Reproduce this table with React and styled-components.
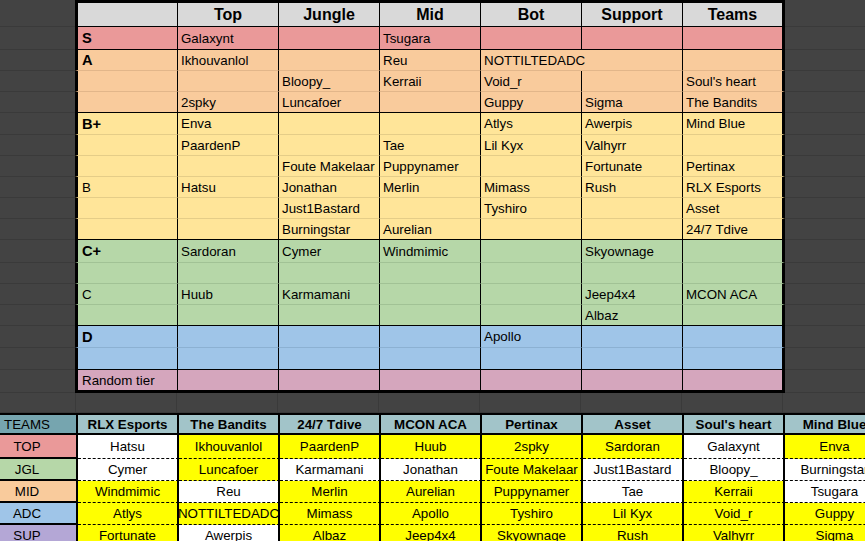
import styled, { createGlobalStyle } from 'styled-components'

const GRID = '#3a3a3a'

const GlobalStyle = createGlobalStyle`
  html, body {
    margin: 0;
    padding: 0;
    background: #434343;
  }

  body {
    font-family: "Liberation Sans", Arial, sans-serif;
    color: #000;
    overflow: hidden;
  }
`

const tiers = {
  S: { bg: '#ea9999', line: '#d48a8a' },
  A: { bg: '#f9cb9c', line: '#e2b68a' },
  B: { bg: '#ffe599', line: '#e5cd88' },
  C: { bg: '#b6d7a8', line: '#a1c295' },
  D: { bg: '#9fc5e8', line: '#8cb1d2' },
  R: { bg: '#d5a6bd', line: '#000' },
}

const columns = ['Top', 'Jungle', 'Mid', 'Bot', 'Support', 'Teams']
const widths = [103, 101, 101, 101, 101, 101, 102]

const tierRows = [
  { tier: 'S', h: 23, label: 'S', strong: true, end: true, cells: ['Galaxynt', '', 'Tsugara', '', '', ''] },
  { tier: 'A', h: 21, label: 'A', strong: true, spill: 4, cells: ['Ikhouvanlol', '', 'Reu', 'NOTTILTEDADC', '', ''] },
  { tier: 'A', h: 21, cells: ['', 'Bloopy_', 'Kerraii', 'Void_r', '', "Soul's heart"] },
  { tier: 'A', h: 21, end: true, cells: ['2spky', 'Luncafoer', '', 'Guppy', 'Sigma', 'The Bandits'] },
  { tier: 'B', h: 22, label: 'B+', strong: true, cells: ['Enva', '', '', 'Atlys', 'Awerpis', 'Mind Blue'] },
  { tier: 'B', h: 21, cells: ['PaardenP', '', 'Tae', 'Lil Kyx', 'Valhyrr', ''] },
  { tier: 'B', h: 21, cells: ['', 'Foute Makelaar', 'Puppynamer', '', 'Fortunate', 'Pertinax'] },
  { tier: 'B', h: 21, label: 'B', cells: ['Hatsu', 'Jonathan', 'Merlin', 'Mimass', 'Rush', 'RLX Esports'] },
  { tier: 'B', h: 21, cells: ['', 'Just1Bastard', '', 'Tyshiro', '', 'Asset'] },
  { tier: 'B', h: 21, end: true, cells: ['', 'Burningstar', 'Aurelian', '', '', '24/7 Tdive'] },
  { tier: 'C', h: 23, label: 'C+', strong: true, cells: ['Sardoran', 'Cymer', 'Windmimic', '', 'Skyownage', ''] },
  { tier: 'C', h: 21, cells: ['', '', '', '', '', ''] },
  { tier: 'C', h: 21, label: 'C', cells: ['Huub', 'Karmamani', '', '', 'Jeep4x4', 'MCON ACA'] },
  { tier: 'C', h: 21, end: true, cells: ['', '', '', '', 'Albaz', ''] },
  { tier: 'D', h: 22, label: 'D', strong: true, cells: ['', '', '', 'Apollo', '', ''] },
  { tier: 'D', h: 22, end: true, cells: ['', '', '', '', '', ''] },
  { tier: 'R', h: 23, label: 'Random tier', last: true, cells: ['', '', '', '', '', ''] },
]

const teams = ['RLX Esports', 'The Bandits', '24/7 Tdive', 'MCON ACA', 'Pertinax', 'Asset', "Soul's heart", 'Mind Blue']

// 1 = picked (yellow), 0 = white
const roster = [
  { role: 'TOP', bg: '#ea9999', h: 24, picks: [['Hatsu', 0], ['Ikhouvanlol', 1], ['PaardenP', 1], ['Huub', 1], ['2spky', 1], ['Sardoran', 1], ['Galaxynt', 0], ['Enva', 1]] },
  { role: 'JGL', bg: '#b6d7a8', h: 22, picks: [['Cymer', 0], ['Luncafoer', 1], ['Karmamani', 0], ['Jonathan', 0], ['Foute Makelaar', 1], ['Just1Bastard', 0], ['Bloopy_', 0], ['Burningstar', 0]] },
  { role: 'MID', bg: '#f9cb9c', h: 22, picks: [['Windmimic', 1], ['Reu', 0], ['Merlin', 1], ['Aurelian', 1], ['Puppynamer', 1], ['Tae', 0], ['Kerraii', 1], ['Tsugara', 0]] },
  { role: 'ADC', bg: '#9fc5e8', h: 22, picks: [['Atlys', 1], ['NOTTILTEDADC', 1], ['Mimass', 1], ['Apollo', 1], ['Tyshiro', 1], ['Lil Kyx', 1], ['Void_r', 1], ['Guppy', 1]] },
  { role: 'SUP', bg: '#b4a7d6', h: 22, picks: [['Fortunate', 1], ['Awerpis', 0], ['Albaz', 1], ['Jeep4x4', 1], ['Skyownage', 1], ['Rush', 1], ['Valhyrr', 1], ['Sigma', 1]] },
]

const Sheet = styled.div`
  width: 865px;
  height: 541px;
  overflow: hidden;
  background: #434343;
`

const Row = styled.div`
  display: flex;
  height: ${p => p.$h}px;
`

const Gutter = styled.div`
  flex: none;
  box-sizing: border-box;
  width: ${p => p.$w}px;
  border-bottom: 1px solid ${GRID};
  border-right: ${p => (p.$v ? `1px solid ${GRID}` : 'none')};
`

const Filler = styled.div`
  flex: 1 0 auto;
  border-bottom: 1px solid ${GRID};
`

const Cell = styled.div`
  flex: none;
  box-sizing: border-box;
  width: ${p => p.$w}px;
  display: flex;
  align-items: center;
  padding: 0 3px 0 ${p => (p.$first ? 4 : 3)}px;
  background: ${p => p.$bg};
  border-left: ${p => (p.$first ? '3px solid #000' : 'none')};
  border-right: ${p => (p.$edge ? 3 : 1)}px solid ${p => (p.$spill ? 'transparent' : '#000')};
  border-bottom: ${p => p.$bottom};
  font-size: ${p => (p.$strong ? '14.67px' : '13.33px')};
  font-weight: ${p => (p.$strong ? 700 : 400)};
  white-space: nowrap;
  overflow: ${p => (p.$spill ? 'visible' : 'hidden')};
  z-index: ${p => (p.$spill ? 1 : 'auto')};
`

const HeadCell = styled(Cell)`
  justify-content: center;
  border-top: 3px solid #000;
  font-size: 16px;
  font-weight: 700;
`

const Label = styled.div`
  flex: none;
  box-sizing: border-box;
  width: 78px;
  display: flex;
  align-items: center;
  justify-content: center;
  padding-right: 22px;
  background: ${p => p.$bg};
  border-top: ${p => (p.$head ? '2px solid #000' : 'none')};
  border-right: 2px solid #000;
  border-bottom: 2px solid #000;
  font-size: 13.33px;
`

const Slot = styled.div`
  flex: none;
  box-sizing: border-box;
  width: 101px;
  display: flex;
  align-items: center;
  justify-content: center;
  background: ${p => (p.$pick ? '#ffff00' : '#fff')};
  border-right: 2px solid #000;
  border-bottom: 1px dashed #000;
  font-size: 13.33px;
  white-space: nowrap;
  overflow: hidden;
`

const TeamHead = styled(Slot)`
  background: #a2c4c9;
  border-top: 2px solid #000;
  border-bottom: 2px solid #000;
  font-weight: 700;
`

const TierTable = () => (
  <>
    <Row $h={27}>
      <Gutter $w={75} />
      {['', ...columns].map((c, i) => (
        <HeadCell key={i} $w={widths[i]} $bg='#d9d9d9' $first={i === 0} $edge={i === 6} $bottom='1px solid #000'>
          {c}
        </HeadCell>
      ))}
      <Filler />
    </Row>

    {tierRows.map((r, ri) => {
      const { bg, line } = tiers[r.tier]
      const bottom = r.last ? '3px solid #000' : `1px solid ${r.end ? '#000' : line}`
      return (
        <Row key={ri} $h={r.h}>
          <Gutter $w={75} />
          {[r.label || '', ...r.cells].map((text, i) => (
            <Cell
              key={i}
              $w={widths[i]}
              $bg={bg}
              $first={i === 0}
              $edge={i === 6}
              $strong={i === 0 && r.strong}
              $spill={r.spill === i}
              $bottom={bottom}
            >
              {text}
            </Cell>
          ))}
          <Filler />
        </Row>
      )
    })}
  </>
)

const SpacerRow = () => (
  <Row $h={20}>
    <Gutter $w={76} $v />
    {widths.map((_, i) => <Gutter key={i} $w={101} $v />)}
    <Filler />
  </Row>
)

const RosterTable = () => (
  <>
    <Row $h={22}>
      <Label $bg='#76a5af' $head>TEAMS</Label>
      {teams.map(t => <TeamHead key={t}>{t}</TeamHead>)}
    </Row>
    {roster.map(r => (
      <Row key={r.role} $h={r.h}>
        <Label $bg={r.bg}>{r.role}</Label>
        {r.picks.map(([name, pick], i) => (
          <Slot key={i} $pick={pick}>{name}</Slot>
        ))}
      </Row>
    ))}
  </>
)

export default function App() {
  return (
    <>
      <GlobalStyle />
      <Sheet>
        <TierTable />
        <SpacerRow />
        <RosterTable />
      </Sheet>
    </>
  )
}
